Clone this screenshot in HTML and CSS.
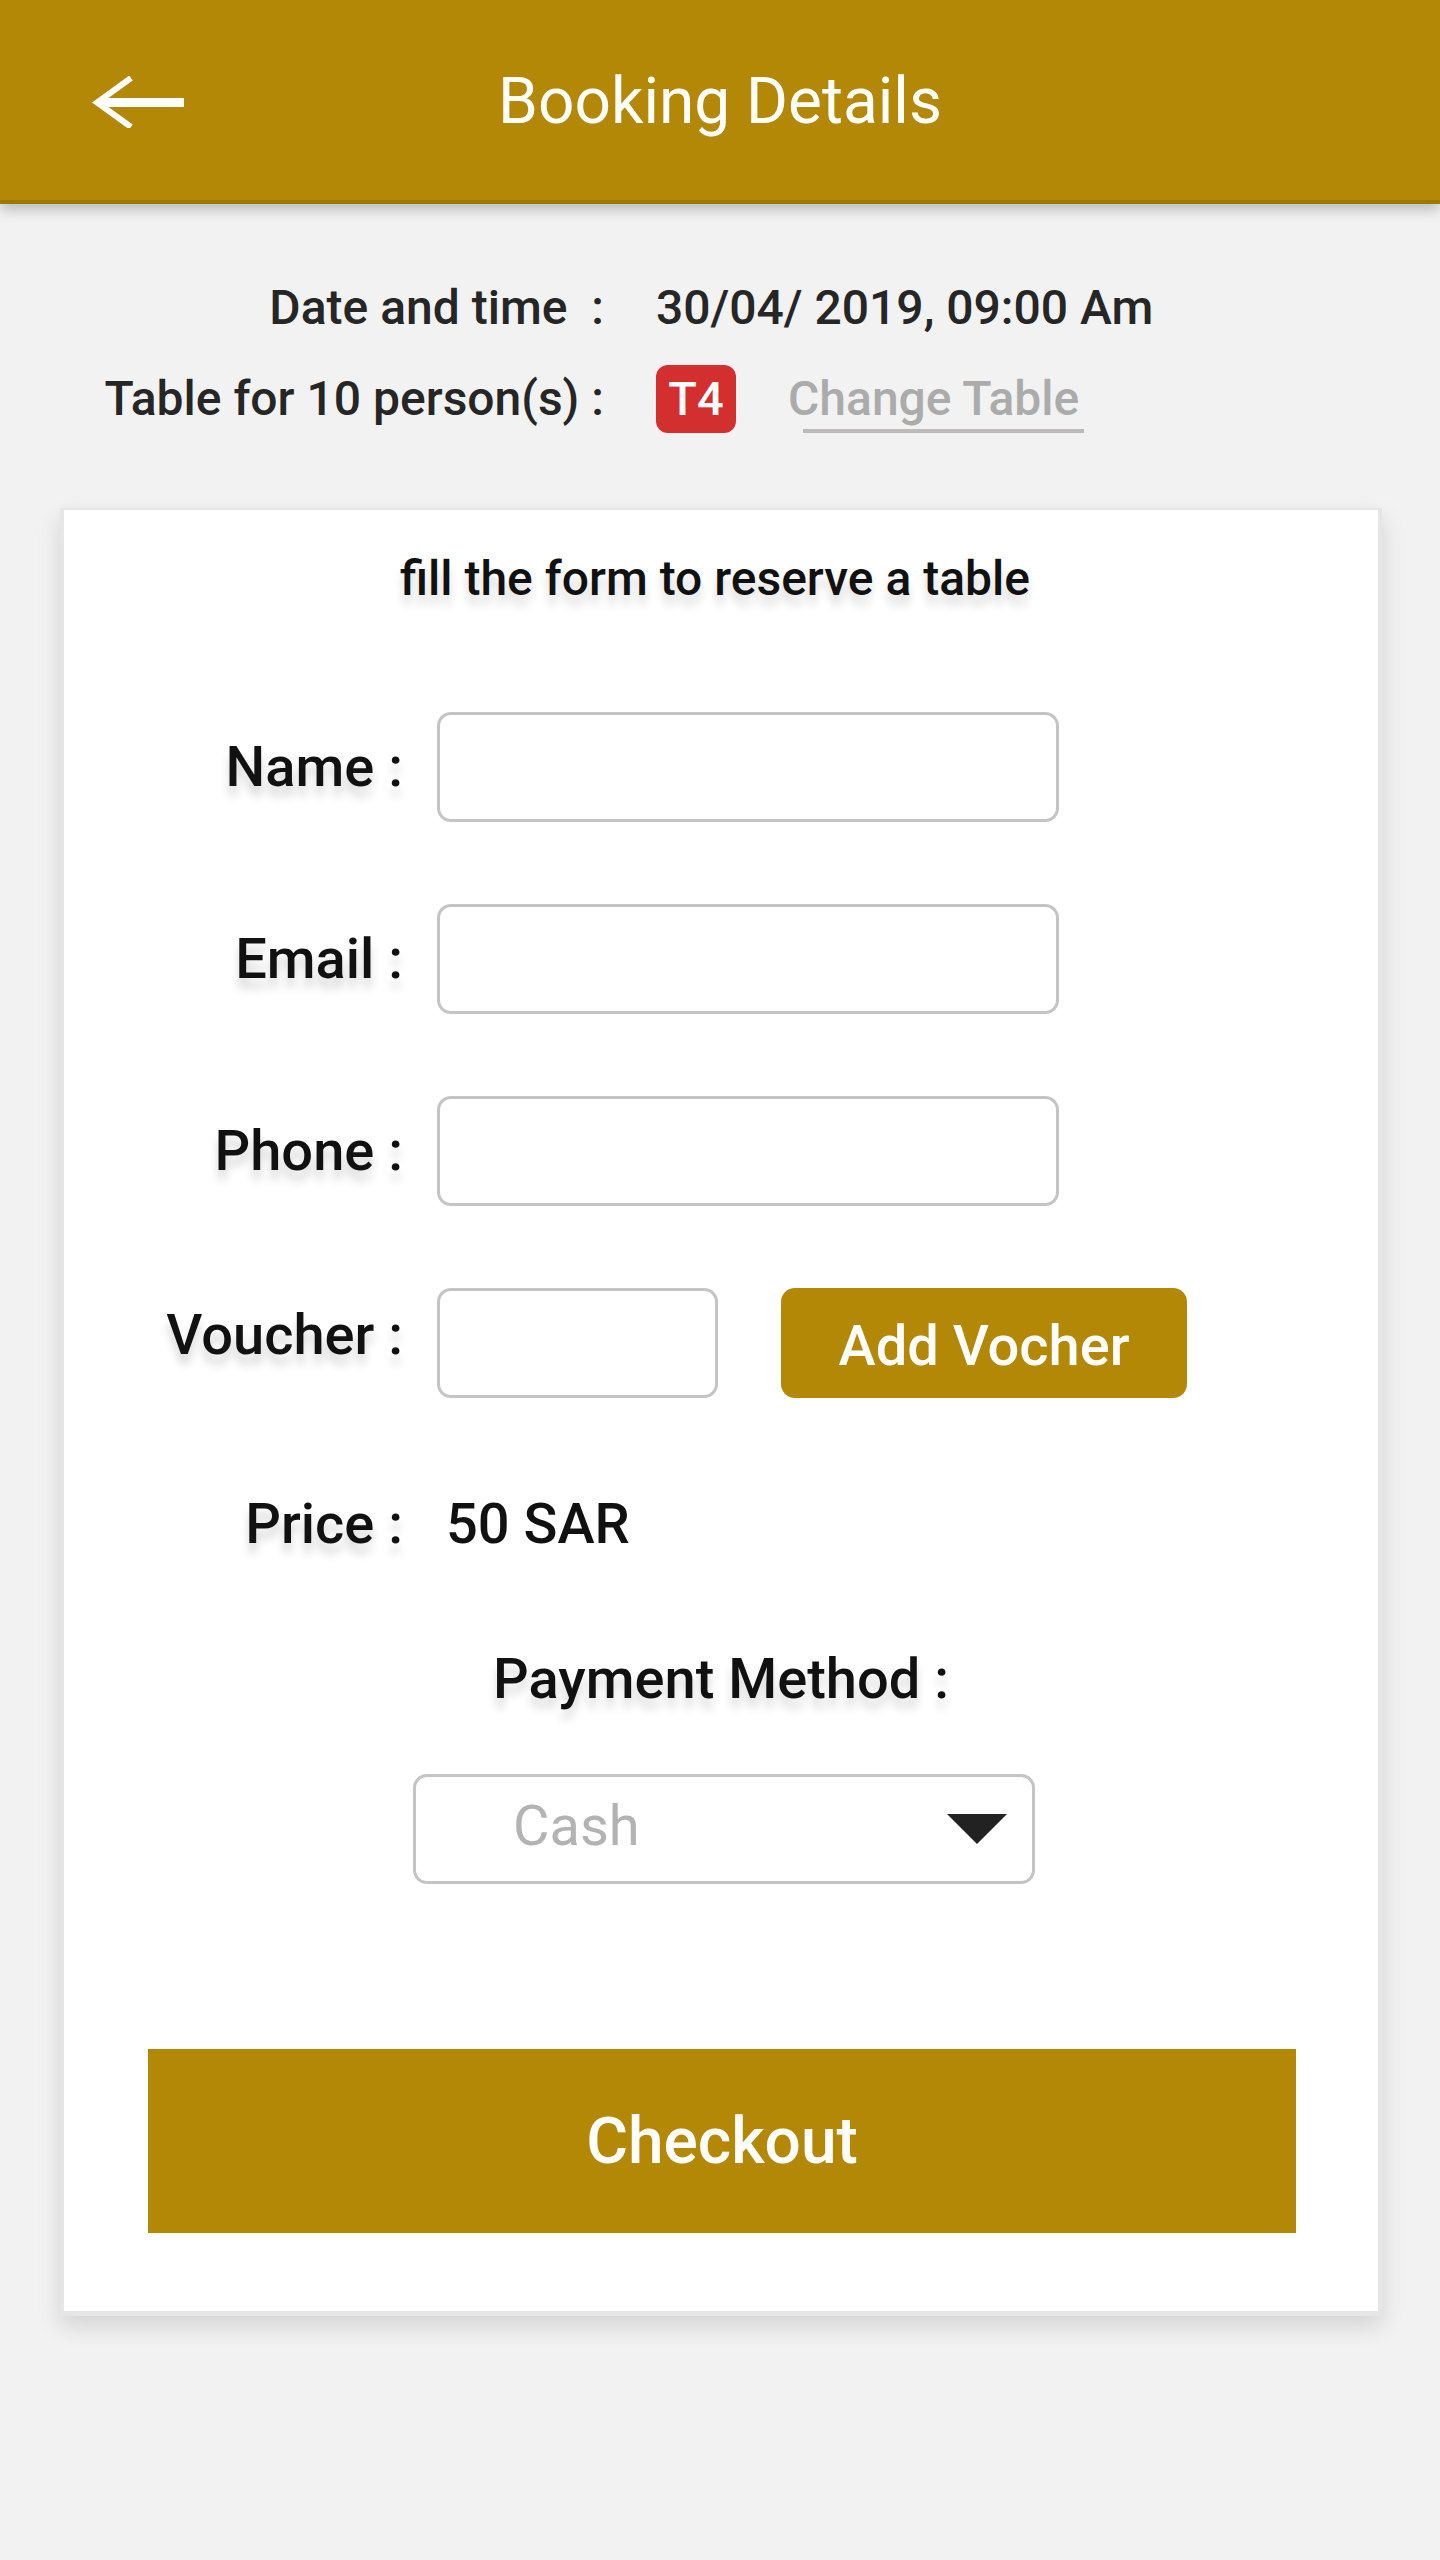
FILE: index.html
```html
<!DOCTYPE html>
<html lang="en">
<head>
<meta charset="utf-8">
<title>Booking Details</title>
<link rel="stylesheet" href="styles.css">
</head>
<body>
<header class="topbar">
  <div class="topbar-left">
    <svg class="back-icon" width="92" height="52" viewBox="0 0 92 52" aria-hidden="true">
      <path d="M39 2 L5 26.5 L39 51" fill="none" stroke="#fff" stroke-width="6" stroke-linejoin="miter"/>
      <rect x="8" y="22" width="84" height="9" fill="#fff"/>
    </svg>
  </div>
  <h1 class="topbar-title">Booking Details</h1>
  <div class="topbar-right"></div>
</header>

<section class="info">
  <div class="info-label">Date and time&nbsp; :</div>
  <div class="info-value">30/04/ 2019, 09:00 Am</div>
  <div class="info-label">Table for 10 person(s) :</div>
  <div class="info-value info-table">
    <span class="badge">T4</span>
    <span class="change-link">Change Table</span>
  </div>
</section>

<main class="card">
  <p class="card-title">fill the form to reserve a table</p>
  <div class="form">
    <label class="form-label">Name :</label>
    <div class="field"><span class="input input-wide"></span></div>

    <label class="form-label">Email :</label>
    <div class="field"><span class="input input-wide"></span></div>

    <label class="form-label">Phone :</label>
    <div class="field"><span class="input input-wide"></span></div>

    <label class="form-label form-label-up">Voucher :</label>
    <div class="field voucher-field">
      <span class="input input-short"></span>
      <span class="btn-voucher">Add Vocher</span>
    </div>

    <label class="form-label price-row">Price :</label>
    <div class="field price-row"><span class="price-value">50 SAR</span></div>
  </div>

  <p class="payment-title">Payment Method :</p>
  <div class="select">
    <span class="select-text">Cash</span>
    <svg class="select-caret" width="60" height="30" viewBox="0 0 60 30" aria-hidden="true">
      <polygon points="0,0 60,0 30,30" fill="#222"/>
    </svg>
  </div>

  <div class="checkout">Checkout</div>
</main>
</body>
</html>
```

FILE: styles.css
```css
html, body {
  margin: 0;
  padding: 0;
}

body {
  background: #f2f2f2;
  font-family: Roboto, "Noto Sans", "Liberation Sans", sans-serif;
  color: #222;
  min-height: 2560px;
}

/* ---------- Top bar ---------- */
.topbar {
  height: 200px;
  background: #b38807;
  border-bottom: 4px solid #9e7806;
  box-shadow: 0 6px 12px rgba(0, 0, 0, 0.22);
  display: grid;
  grid-template-columns: 1fr auto 1fr;
  align-items: center;
}

.topbar-left {
  padding-left: 92px;
  display: flex;
  align-items: center;
  padding-top: 4px;
}

.back-icon {
  display: block;
}

.topbar-title {
  margin: 0;
  font-size: 64px;
  font-weight: 400;
  line-height: 1;
  color: #fff;
  padding-top: 3px;
}

/* ---------- Info ---------- */
.info {
  display: grid;
  grid-template-columns: 604px auto;
  column-gap: 52px;
  row-gap: 27px;
  align-items: center;
  padding-top: 74px;
  font-size: 48px;
  font-weight: 500;
  line-height: 60px;
  color: #262626;
}

.info-label {
  text-align: right;
  white-space: nowrap;
}

.info-value {
  white-space: nowrap;
}

.info-table {
  display: flex;
  align-items: center;
  gap: 52px;
}

.badge {
  display: inline-flex;
  align-items: center;
  justify-content: center;
  width: 80px;
  height: 68px;
  border-radius: 12px;
  background: #d32f2f;
  color: #fff;
  font-size: 47px;
}

.change-link {
  position: relative;
  color: #ababab;
}

.change-link::after {
  content: "";
  position: absolute;
  left: 15px;
  right: -5px;
  bottom: -4px;
  height: 4px;
  background: #bdbabb;
}

/* ---------- Card ---------- */
.card {
  box-sizing: border-box;
  width: 1322px;
  margin: 75px 0 0 60px;
  background: #fff;
  border: 4px solid #e6e6e6;
  border-top-width: 2px;
  border-bottom-width: 5px;
  box-shadow: 0 10px 22px rgba(0, 0, 0, 0.13);
  padding: 41px 0 78px;
}

.card-title {
  margin: 0;
  text-align: center;
  font-size: 48px;
  font-weight: 500;
  line-height: 56px;
  color: #111;
  text-shadow: 0 10px 10px rgba(0, 0, 0, 0.14);
  padding-right: 12px;
}

.form {
  display: grid;
  grid-template-columns: 339px 1fr;
  column-gap: 34px;
  row-gap: 82px;
  grid-auto-rows: 110px;
  align-items: center;
  margin-top: 105px;
}

.form-label {
  text-align: right;
  font-size: 56px;
  font-weight: 500;
  line-height: 64px;
  color: #111;
  text-shadow: 0 10px 10px rgba(0, 0, 0, 0.16);
  white-space: nowrap;
}

.form-label-up {
  margin-bottom: 16px;
}

.field {
  display: flex;
  align-items: center;
  height: 110px;
}

.input {
  display: block;
  box-sizing: border-box;
  height: 110px;
  border: 3px solid #c4c4c4;
  border-radius: 14px;
  background: #fff;
}

.input-wide {
  width: 622px;
}

.input-short {
  width: 281px;
}

.voucher-field {
  gap: 63px;
}

.btn-voucher {
  display: flex;
  align-items: center;
  justify-content: center;
  box-sizing: border-box;
  width: 406px;
  height: 110px;
  border-radius: 14px;
  background: #b38807;
  color: #fff;
  font-size: 56px;
  font-weight: 500;
  padding-top: 6px;
}

.price-row {
  height: 88px;
}

.form .price-row:nth-last-child(-n+2) {
  align-self: start;
}

.form-label.price-row {
  display: flex;
  align-items: center;
  justify-content: flex-end;
}

.price-value {
  padding-left: 9px;
  font-size: 56px;
  font-weight: 500;
  color: #111;
}

.payment-title {
  margin: 0;
  margin-top: 57px;
  text-align: center;
  font-size: 56px;
  font-weight: 500;
  line-height: 64px;
  color: #111;
  text-shadow: 0 10px 10px rgba(0, 0, 0, 0.14);
}

.select {
  box-sizing: border-box;
  width: 622px;
  height: 110px;
  margin: 63px auto 0;
  position: relative;
  left: 3px;
  border: 3px solid #c4c4c4;
  border-radius: 14px;
  display: flex;
  align-items: center;
  justify-content: space-between;
  padding: 0 25px 0 97px;
}

.select-text {
  font-size: 56px;
  color: #b3b3b3;
  padding-bottom: 6px;
}

.select-caret {
  display: block;
}

.checkout {
  box-sizing: border-box;
  width: 1148px;
  height: 184px;
  margin: 165px 0 0 84px;
  background: #b38807;
  color: #fff;
  font-size: 64px;
  font-weight: 500;
  display: flex;
  align-items: center;
  justify-content: center;
}
```
